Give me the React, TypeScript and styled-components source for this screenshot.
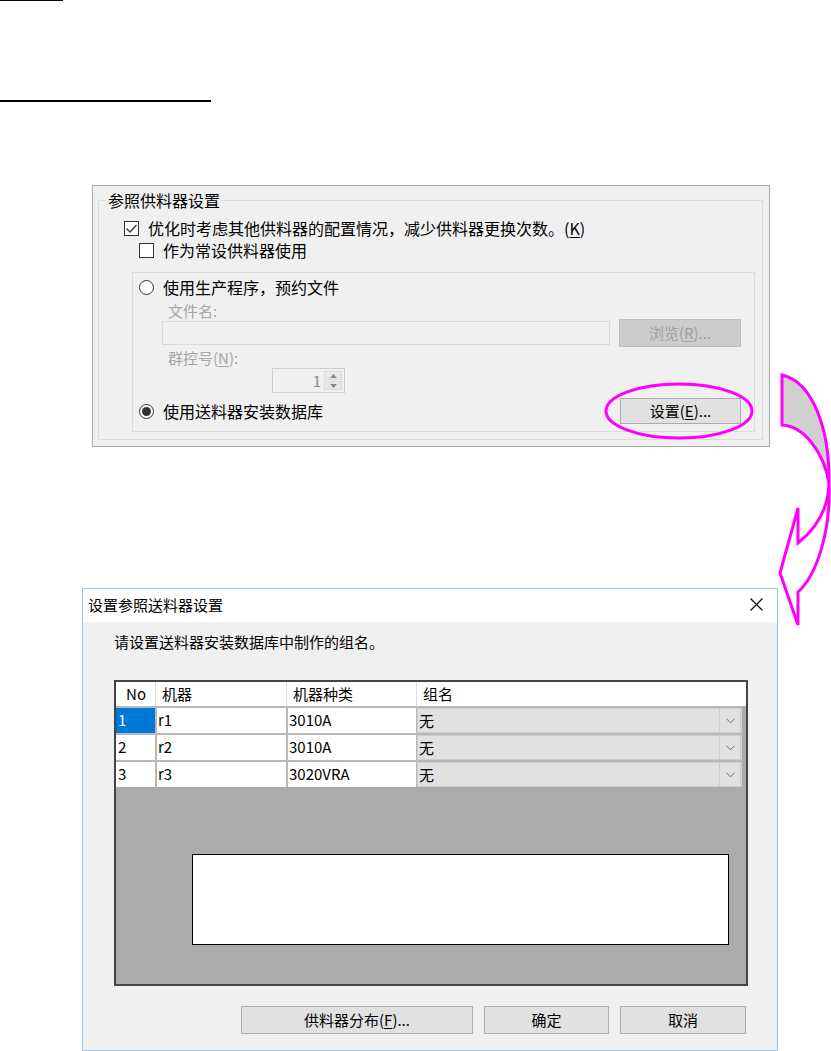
import React from "react";
import styled, { createGlobalStyle } from "styled-components";

const GlobalStyle = createGlobalStyle`
  html, body { margin: 0; padding: 0; background: #ffffff; }
  body { font-family: "Noto Sans CJK SC", "Noto Sans", sans-serif; color: #000; }
  *, *::before, *::after { box-sizing: border-box; }
`;

const Page = styled.div`
  position: relative;
  width: 831px;
  height: 1051px;
  overflow: hidden;
  background: #ffffff;
`;

const Rule = styled.div<{ $w: number; $h: number; $mt: number }>`
  width: ${(p) => p.$w}px;
  height: ${(p) => p.$h}px;
  margin-top: ${(p) => p.$mt}px;
  background: #000;
`;

/* ---------- top settings panel ---------- */

const Panel = styled.div`
  margin: 83px 0 0 92px;
  width: 678px;
  height: 262px;
  border: 1px solid #a9a9a9;
  background: #f0f0f0;
  padding: 4px 6px 0 5px;
  font-size: 16px;
`;

const Group = styled.fieldset`
  margin: 0;
  padding: 0;
  min-width: 0;
  border: 1px solid #dcdcdc;
`;

const Legend = styled.legend`
  margin-left: 7px;
  padding: 0 2px;
  line-height: 20px;
  font-size: 16px;
`;

const GroupInner = styled.div`
  padding: 7px 7px 7px 25px;
`;

const OptionRow = styled.div<{ $indent?: number; $mt?: number }>`
  display: flex;
  align-items: center;
  gap: 9px;
  height: 22px;
  line-height: 22px;
  margin-left: ${(p) => p.$indent ?? 0}px;
  margin-top: ${(p) => p.$mt ?? 0}px;
  white-space: nowrap;
`;

const Box = styled.span`
  display: inline-flex;
  align-items: center;
  justify-content: center;
  width: 15px;
  height: 15px;
  border: 1px solid #333;
  background: #fff;
  flex: none;
`;

const Radio = styled.span<{ $on?: boolean }>`
  display: inline-flex;
  align-items: center;
  justify-content: center;
  width: 15px;
  height: 15px;
  border-radius: 50%;
  border: 1px solid #333;
  background: #fff;
  flex: none;
  &::after {
    content: "";
    display: ${(p) => (p.$on ? "block" : "none")};
    width: 9px;
    height: 9px;
    border-radius: 50%;
    background: #333;
  }
`;

const Key = styled.span`
  text-decoration: underline;
  text-underline-offset: 2px;
`;

const SubGroup = styled.div`
  margin: 11px 0 0 8px;
  height: 160px;
  border: 1px solid #dcdcdc;
  padding: 3px 13px 0 6px;
`;

const DimLabel = styled.div<{ $mt: number }>`
  margin: ${(p) => p.$mt}px 0 0 29px;
  line-height: 16px;
  height: 16px;
  font-size: 15px;
  color: #a6a6a6;
`;

const FieldRow = styled.div`
  display: flex;
  align-items: center;
  gap: 9px;
  height: 28px;
  margin-left: 23px;
`;

const TextField = styled.div`
  flex: 1;
  height: 24px;
  border: 1px solid #d9d9d9;
  background: #f0f0f0;
`;

const WinButton = styled.div<{ $w: number; $h: number; $disabled?: boolean }>`
  flex: none;
  width: ${(p) => p.$w}px;
  height: ${(p) => p.$h}px;
  display: flex;
  align-items: center;
  justify-content: center;
  font-size: 15px;
  line-height: 18px;
  background: ${(p) => (p.$disabled ? "#cccccc" : "#e1e1e1")};
  border: 1px solid ${(p) => (p.$disabled ? "#bfbfbf" : "#adadad")};
  color: ${(p) => (p.$disabled ? "#a0a0a0" : "#000")};
  white-space: nowrap;
`;

const Spinner = styled.div`
  margin: 2px 0 0 133px;
  width: 73px;
  height: 25px;
  border: 1px solid #cccccc;
  background: #f0f0f0;
  display: flex;
  align-items: stretch;
  padding: 2px 2px 2px 0;
`;

const SpinValue = styled.div`
  flex: 1;
  text-align: right;
  padding-right: 3px;
  font-size: 15px;
  line-height: 19px;
  color: #8a8a8a;
`;

const SpinArrows = styled.div`
  width: 18px;
  display: flex;
  flex-direction: column;
  gap: 1px;
`;

const SpinArrow = styled.div`
  flex: 1;
  display: flex;
  align-items: center;
  justify-content: center;
  background: #e8e8e8;
  border: 1px solid #dadada;
`;

const DbRow = styled.div`
  display: flex;
  align-items: center;
  justify-content: space-between;
  height: 26px;
  margin-top: 5px;
  white-space: nowrap;
`;

const DbLabel = styled.div`
  display: flex;
  align-items: center;
  gap: 9px;
`;

/* ---------- dialog ---------- */

const Dialog = styled.div`
  margin: 141px 0 0 82px;
  width: 696px;
  height: 463px;
  border: 1px solid #9fc4e7;
  background: #f0f0f0;
  display: flex;
  flex-direction: column;
  font-size: 15px;
`;

const TitleBar = styled.div`
  height: 33px;
  flex: none;
  background: #fff;
  display: flex;
  align-items: center;
  justify-content: space-between;
  padding: 0 14px 2px 5px;
  line-height: 20px;
`;

const DialogBody = styled.div`
  padding: 0 29px 0 31px;
  display: flex;
  flex-direction: column;
`;

const Prompt = styled.div`
  margin-top: 10px;
  line-height: 20px;
`;

const Grid = styled.div`
  margin-top: 28px;
  width: 634px;
  height: 306px;
  border: 2px solid #454545;
  background: #ababab;
  display: flex;
  flex-direction: column;
`;

const COLS = "39px 131px 130px 326px";

const HeaderRow = styled.div`
  display: grid;
  grid-template-columns: ${COLS};
  height: 24px;
  background: #fff;
`;

const HeadCell = styled.div<{ $center?: boolean }>`
  line-height: 24px;
  padding-left: ${(p) => (p.$center ? 0 : 6)}px;
  text-align: ${(p) => (p.$center ? "center" : "left")};
  border-left: 1px solid ${(p) => (p.$center ? "transparent" : "#dcdcdc")};
`;

const DataRow = styled.div`
  display: grid;
  grid-template-columns: ${COLS};
  height: 27px;
`;

const Cell = styled.div<{ $first?: boolean; $selected?: boolean }>`
  border-top: 2px solid #b8b8b8;
  border-left: ${(p) => (p.$first ? "0" : "2px solid #b8b8b8")};
  background: ${(p) => (p.$selected ? "#0078d7" : "#fff")};
  color: ${(p) => (p.$selected ? "#fff" : "#000")};
  line-height: 24px;
  padding-left: ${(p) => (p.$first ? 2 : 1)}px;
  white-space: nowrap;
`;

const ComboCell = styled.div`
  border-top: 2px solid #b8b8b8;
  border-left: 1px solid #b8b8b8;
  background: #cfcfcf;
  display: flex;
`;

const Combo = styled.div`
  flex: 1;
  display: flex;
  background: #e1e1e1;
  border: 1px solid #cdcdcd;
  margin-right: 1px;
`;

const ComboText = styled.div`
  flex: 1;
  line-height: 23px;
  padding-left: 1px;
`;

const ComboDrop = styled.div`
  width: 21px;
  border-left: 1px solid #cdcdcd;
  display: flex;
  align-items: center;
  justify-content: center;
`;

const BlankBox = styled.div`
  margin: 67px 0 0 76px;
  width: 537px;
  height: 91px;
  background: #fff;
  border: 1px solid #000;
`;

const ButtonRow = styled.div`
  margin-top: 20px;
  display: flex;
  justify-content: flex-end;
  padding-right: 2px;
  gap: 11px;
`;

/* ---------- annotations ---------- */

const Overlay = styled.svg<{ $x: number; $y: number }>`
  position: absolute;
  left: ${(p) => p.$x}px;
  top: ${(p) => p.$y}px;
  overflow: visible;
`;

const Check = () => (
  <svg width="13" height="13" viewBox="0 0 13 13">
    <path d="M1.5 6.5 L5 10 L11.5 3" fill="none" stroke="#333" strokeWidth="1.3" />
  </svg>
);

const Chevron = () => (
  <svg width="9" height="6" viewBox="0 0 9 6">
    <path d="M0.5 0.8 L4.5 4.8 L8.5 0.8" fill="none" stroke="#707070" strokeWidth="1" />
  </svg>
);

const Tri = ({ up }: { up?: boolean }) => (
  <svg width="7" height="4" viewBox="0 0 7 4">
    <path d={up ? "M0 4 L3.5 0 L7 4 Z" : "M0 0 L3.5 4 L7 0 Z"} fill="#8a8a8a" />
  </svg>
);

const CloseX = () => (
  <svg width="13" height="13" viewBox="0 0 13 13">
    <path d="M0.5 0.5 L12.5 12.5 M12.5 0.5 L0.5 12.5" stroke="#111" strokeWidth="1.3" />
  </svg>
);

const rows = [
  { no: "1", m: "r1", t: "3010A", g: "无" },
  { no: "2", m: "r2", t: "3010A", g: "无" },
  { no: "3", m: "r3", t: "3020VRA", g: "无" },
];

export default function App() {
  return (
    <Page>
      <GlobalStyle />
      <Rule $w={63} $h={1} $mt={0} />
      <Rule $w={211} $h={2} $mt={99} />

      <Panel>
        <Group>
          <Legend>参照供料器设置</Legend>
          <GroupInner>
            <OptionRow>
              <Box>
                <Check />
              </Box>
              <span>
                优化时考虑其他供料器的配置情况，减少供料器更换次数。(<Key>K</Key>)
              </span>
            </OptionRow>
            <OptionRow $indent={15}>
              <Box />
              <span>作为常设供料器使用</span>
            </OptionRow>
            <SubGroup>
              <OptionRow>
                <Radio />
                <span>使用生产程序，预约文件</span>
              </OptionRow>
              <DimLabel $mt={5}>文件名:</DimLabel>
              <FieldRow>
                <TextField />
                <WinButton $w={122} $h={28} $disabled>
                  浏览(<Key>R</Key>)...
                </WinButton>
              </FieldRow>
              <DimLabel $mt={3}>
                群控号(<Key>N</Key>):
              </DimLabel>
              <Spinner>
                <SpinValue>1</SpinValue>
                <SpinArrows>
                  <SpinArrow>
                    <Tri up />
                  </SpinArrow>
                  <SpinArrow>
                    <Tri />
                  </SpinArrow>
                </SpinArrows>
              </Spinner>
              <DbRow>
                <DbLabel>
                  <Radio $on />
                  <span>使用送料器安装数据库</span>
                </DbLabel>
                <WinButton $w={121} $h={26}>
                  设置(<Key>E</Key>)...
                </WinButton>
              </DbRow>
            </SubGroup>
          </GroupInner>
        </Group>
      </Panel>

      <Dialog>
        <TitleBar>
          <span>设置参照送料器设置</span>
          <CloseX />
        </TitleBar>
        <DialogBody>
          <Prompt>请设置送料器安装数据库中制作的组名。</Prompt>
          <Grid>
            <HeaderRow>
              <HeadCell $center>No</HeadCell>
              <HeadCell>机器</HeadCell>
              <HeadCell>机器种类</HeadCell>
              <HeadCell>组名</HeadCell>
            </HeaderRow>
            {rows.map((r, i) => (
              <DataRow key={r.no}>
                <Cell $first $selected={i === 0}>
                  {r.no}
                </Cell>
                <Cell>{r.m}</Cell>
                <Cell>{r.t}</Cell>
                <ComboCell>
                  <Combo>
                    <ComboText>{r.g}</ComboText>
                    <ComboDrop>
                      <Chevron />
                    </ComboDrop>
                  </Combo>
                </ComboCell>
              </DataRow>
            ))}
            <BlankBox />
          </Grid>
          <ButtonRow>
            <WinButton $w={232} $h={28}>
              供料器分布(<Key>F</Key>)...
            </WinButton>
            <WinButton $w={125} $h={28}>
              确定
            </WinButton>
            <WinButton $w={126} $h={28}>
              取消
            </WinButton>
          </ButtonRow>
        </DialogBody>
      </Dialog>

      <Overlay $x={603} $y={382} width="152" height="58" viewBox="0 0 152 58">
        <ellipse cx="76" cy="29" rx="73" ry="27" fill="none" stroke="#ff00ff" strokeWidth="3" />
      </Overlay>

      <Overlay $x={775} $y={370} width="56" height="260" viewBox="0 0 56 260">
        <path
          d="M7 5 C38 12 55 60 54 114 C50 85 30 56 7 55 Z"
          fill="#d0d0d0"
          stroke="#ff00ff"
          strokeWidth="3"
          strokeLinejoin="miter"
        />
        <path
          d="M54 114 C56 160 42 205 23 222 L23 255 L5 203 L23 138 L23 173 C42 158 53 140 54 114 Z"
          fill="#ffffff"
          stroke="#ff00ff"
          strokeWidth="3"
          strokeLinejoin="miter"
        />
      </Overlay>
    </Page>
  );
}
